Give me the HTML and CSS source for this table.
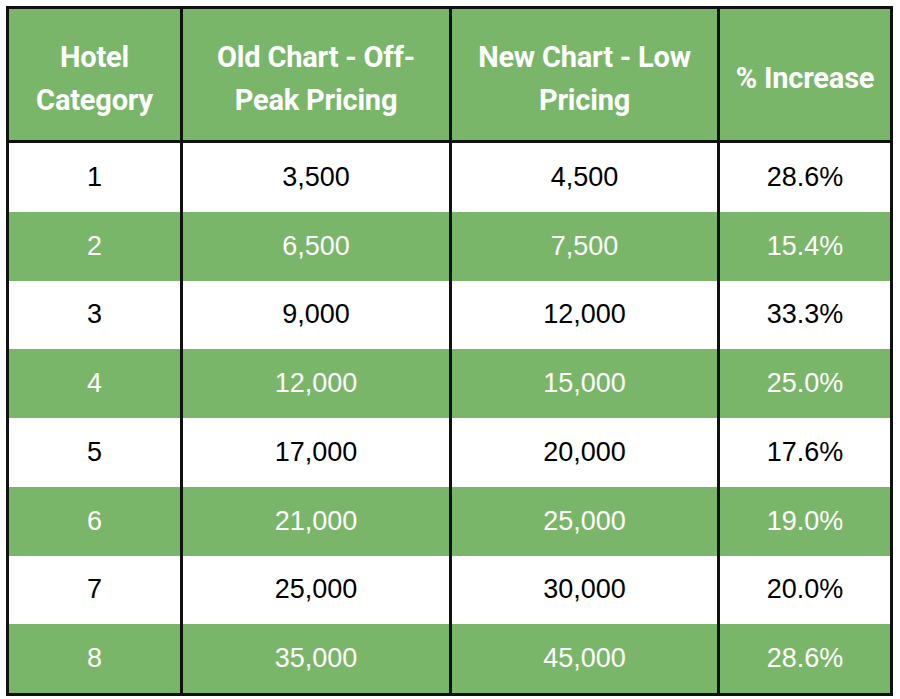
FILE: index.html
```html
<!DOCTYPE html>
<html>
<head>
<meta charset="utf-8">
<link rel="stylesheet" href="styles.css">
</head>
<body>
<table class="chart">
  <colgroup>
    <col class="c1"><col class="c2"><col class="c3"><col class="c4">
  </colgroup>
  <thead>
    <tr>
      <th>Hotel<br>Category</th>
      <th>Old Chart - Off-<br>Peak Pricing</th>
      <th>New Chart - Low<br>Pricing</th>
      <th>% Increase</th>
    </tr>
  </thead>
  <tbody>
    <tr class="odd"><td>1</td><td>3,500</td><td>4,500</td><td>28.6%</td></tr>
    <tr class="even"><td>2</td><td>6,500</td><td>7,500</td><td>15.4%</td></tr>
    <tr class="odd"><td>3</td><td>9,000</td><td>12,000</td><td>33.3%</td></tr>
    <tr class="even"><td>4</td><td>12,000</td><td>15,000</td><td>25.0%</td></tr>
    <tr class="odd"><td>5</td><td>17,000</td><td>20,000</td><td>17.6%</td></tr>
    <tr class="even"><td>6</td><td>21,000</td><td>25,000</td><td>19.0%</td></tr>
    <tr class="odd"><td>7</td><td>25,000</td><td>30,000</td><td>20.0%</td></tr>
    <tr class="even"><td>8</td><td>35,000</td><td>45,000</td><td>28.6%</td></tr>
  </tbody>
</table>
</body>
</html>
```
FILE: styles.css
```css
html, body {
  margin: 0;
  padding: 0;
  background: #ffffff;
}
body {
  padding: 6px;
}
.chart {
  border-collapse: separate;
  border-spacing: 0;
  border: 3px solid #111;
  width: 887px;
  table-layout: fixed;
}
.c1 { width: 174px; }
.c2 { width: 269px; }
.c3 { width: 268px; }
.c4 { width: 170px; }
.chart th, .chart td {
  padding: 0;
  text-align: center;
  vertical-align: middle;
  border-right: 3px solid #111;
}
.chart th:last-child, .chart td:last-child {
  border-right: none;
}
.chart th {
  background: #7ab66a;
  color: #fff;
  font-family: Roboto, "Liberation Sans", sans-serif;
  font-weight: bold;
  font-size: 29px;
  line-height: 43px;
  height: 123px;
  padding-top: 8px;
  border-bottom: 3px solid #111;
  letter-spacing: -0.2px;
}
.chart td {
  font-family: "Liberation Sans", Arial, sans-serif;
  font-size: 27px;
  height: 68.75px;
}
.odd td {
  background: #ffffff;
  color: #000;
}
.even td {
  background: #7ab66a;
  color: #fff;
}
```
